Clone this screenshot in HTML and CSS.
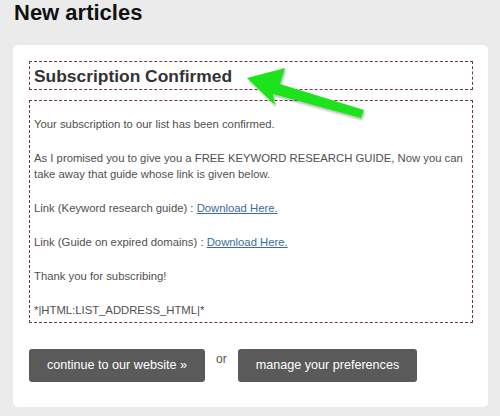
FILE: index.html
```html
<!DOCTYPE html>
<html lang="en">
<head>
    <meta charset="UTF-8">
    <meta name="viewport" content="width=device-width, initial-scale=1.0">
    <title>New articles</title>
    <link rel="stylesheet" href="styles.css">
</head>
<body>

    <div class="page">
        <h1>New articles</h1>

        <div class="card">
            <div class="title-box">
                <h2>Subscription Confirmed</h2>
            </div>

            <div class="content-box">
                <p>Your subscription to our list has been confirmed.</p>
                <p>As I promised you to give you a FREE KEYWORD RESEARCH GUIDE, Now you can take away that guide whose link is given below.</p>
                <p>Link (Keyword research guide) : <a href="#">Download Here.</a></p>
                <p>Link (Guide on expired domains) : <a href="#">Download Here.</a></p>
                <p>Thank you for subscribing!</p>
                <p>*|HTML:LIST_ADDRESS_HTML|*</p>
            </div>

            <div class="actions">
                <a class="btn" href="#">continue to our website &raquo;</a>
                <span class="or">or</span>
                <a class="btn" href="#">manage your preferences</a>
            </div>
        </div>

        <!-- green pointer added on the screenshot -->
        <svg class="arrow" width="130" height="60" viewBox="240 64 130 60">
            <defs>
                <filter id="shadow" x="-20%" y="-20%" width="140%" height="150%">
                    <feDropShadow dx="1" dy="2" stdDeviation="1.2" flood-color="#000" flood-opacity="0.3"/>
                </filter>
            </defs>
            <polygon points="247,78 285,68 280,84 364,110 361,118 273,94 275,105" fill="#1fe31a" filter="url(#shadow)"/>
        </svg>
    </div>

</body>
</html>
```

FILE: styles.css
```css
body {
    margin: 0;
    background-color: #ebebeb;
    font-family: "Liberation Sans", Arial, sans-serif;
}

.page {
    position: relative;
    padding: 0 12px 9px 13px;
}

h1 {
    margin: 0 0 19px 1px;
    font-size: 22px;
    line-height: 26px;
    color: #111;
}

.card {
    background-color: #fff;
    border-radius: 5px;
    padding: 16px 15px 25px 16px;
}

.title-box {
    border: 1px dashed #6b3d3d;
    padding: 3px 4px 2px;
    margin-bottom: 10px;
}

h2 {
    margin: 0;
    font-size: 17.4px;
    line-height: 22px;
    color: #333;
}

.content-box {
    border: 1px dashed #6b3d3d;
    padding: 15px 4px 4px;
    font-size: 11.3px;
    line-height: 16px;
    color: #505050;
}

.content-box p {
    margin: 0 0 18px;
}

.content-box p:last-child {
    margin-bottom: 0;
}

.content-box a {
    color: #3a6d9a;
}

.actions {
    display: flex;
    align-items: flex-start;
    margin-top: 26px;
}

.btn {
    display: block;
    height: 33px;
    line-height: 33px;
    padding: 0 18px;
    background-color: #5a5a5a;
    border-radius: 3px;
    color: #fff;
    font-size: 12.6px;
    text-decoration: none;
}

.or {
    margin: 2px 11px 0;
    font-size: 12px;
    line-height: 16px;
    color: #555;
}

.arrow {
    position: absolute;
    left: 240px;
    top: 64px;
}
```
